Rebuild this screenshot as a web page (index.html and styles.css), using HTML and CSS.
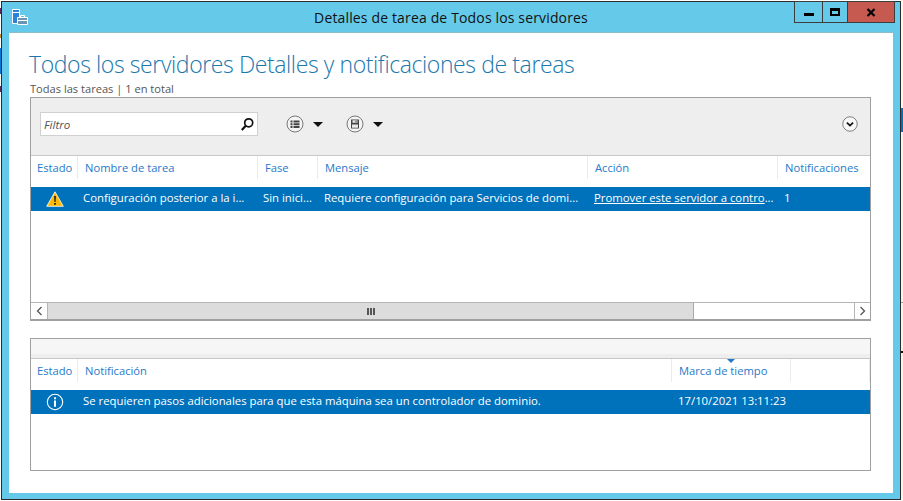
FILE: index.html
```html
<!DOCTYPE html>
<html lang="es">
<head>
<meta charset="utf-8">
<title>Detalles de tarea de Todos los servidores</title>
<link rel="stylesheet" href="styles.css">
</head>
<body>
<div class="window">
  <header class="titlebar">
    <svg class="app-icon" width="18" height="18" viewBox="0 0 18 18">
      <path d="M1.500.5h7v14h-7z" fill="#2b83d8" stroke="#fff"/>
      <path d="M2 3.500h6" stroke="#fff"/>
      <path d="M6.500 8.500h10v7h-10z" fill="#6b94b4" stroke="#fff"/>
      <path d="M9.500 8V6.500h4V8M7 11.500h9" stroke="#fff" fill="none"/>
    </svg>
    <div class="window-title">Detalles de tarea de Todos los servidores</div>
    <div class="controls">
      <div class="ctl ctl-min"><span class="glyph-min"></span></div>
      <div class="ctl ctl-max"><span class="glyph-max"></span></div>
      <div class="ctl ctl-close">
        <svg width="10" height="9" viewBox="0 0 10 9"><path d="M1.500 1l7 7M8.500 1l-7 7" stroke="#000" stroke-width="2.200" fill="none"/></svg>
      </div>
    </div>
  </header>
  <main class="content">
    <h1 class="heading">Todos los servidores Detalles y notificaciones de tareas</h1>
    <p class="summary">Todas las tareas | 1 en total</p>

    <section class="panel panel-top">
      <div class="toolbar">
        <div class="filter">
          <span class="filter-text">Filtro</span>
          <svg width="15" height="15" viewBox="0 0 15 15"><circle cx="8.700" cy="5.800" r="4" fill="none" stroke="#111" stroke-width="1.700"/><path d="M5.800 8.800L1.800 13" stroke="#111" stroke-width="2.200"/></svg>
        </div>
        <div class="tool">
          <svg width="18" height="18" viewBox="0 0 18 18"><circle cx="9" cy="9" r="8" fill="#f4f4f4" stroke="#777"/><path d="M4.500 5.500h2v2h-2zM4.500 8.200h2v2h-2zM4.500 10.900h2v2h-2zM7.500 5.500h6v2h-6zM7.500 8.200h6v2h-6zM7.500 10.900h6v2h-6z" fill="#444"/></svg>
          <span class="caret"></span>
        </div>
        <div class="tool">
          <svg width="18" height="18" viewBox="0 0 18 18"><circle cx="9" cy="9" r="8" fill="#f4f4f4" stroke="#777"/><path d="M5 4.500h8v9H5z" fill="#444"/><path d="M6.500 5.200h5v2.600h-5zM6 9.500h6v3.300H6z" fill="#e8e8e8"/><path d="M9.500 5.500h1v2h-1z" fill="#444"/></svg>
          <span class="caret"></span>
        </div>
        <svg class="expand" width="16" height="16" viewBox="0 0 17 17"><circle cx="8.500" cy="8.500" r="7.700" fill="#f8f8f8" stroke="#777"/><path d="M5.200 7l3.300 3.200L11.800 7" fill="none" stroke="#111" stroke-width="1.900"/></svg>
      </div>
      <div class="cols cols-tasks head">
        <div class="hcell">Estado</div>
        <div class="hcell">Nombre de tarea</div>
        <div class="hcell">Fase</div>
        <div class="hcell">Mensaje</div>
        <div class="hcell">Acción</div>
        <div class="hcell">Notificaciones</div>
      </div>
      <div class="cols cols-tasks row">
        <div class="cell cell-icon">
          <svg width="18" height="16" viewBox="0 0 18 16"><path d="M9 .8L17.300 15.300H.7z" fill="#ffb900" stroke="#fff" stroke-width=".8"/><path d="M8.100 5h1.800l-.3 6H8.400zM8.100 12h1.800v1.800H8.100z" fill="#222"/></svg>
        </div>
        <div class="cell cell-tight">Configuración posterior a la i...</div>
        <div class="cell cell-tight">Sin inici...</div>
        <div class="cell">Requiere configuración para Servicios de domi...</div>
        <div class="cell"><a class="link">Promover este servidor a contro</a>...</div>
        <div class="cell">1</div>
      </div>
      <div class="spacer spacer-top"></div>
      <div class="scrollbar">
        <div class="sb-btn">
          <svg width="7" height="10" viewBox="0 0 7 10"><path d="M5.500 1L1.500 5l4 4" fill="none" stroke="#555" stroke-width="1.300"/></svg>
        </div>
        <div class="sb-thumb"><span class="grip"></span></div>
        <div class="sb-rest"></div>
        <div class="sb-btn sb-btn-right">
          <svg width="7" height="10" viewBox="0 0 7 10"><path d="M1.500 1l4 4-4 4" fill="none" stroke="#555" stroke-width="1.300"/></svg>
        </div>
      </div>
    </section>

    <section class="panel panel-bottom">
      <div class="strip"></div>
      <div class="cols cols-notes head">
        <div class="hcell">Estado</div>
        <div class="hcell">Notificación</div>
        <div class="hcell hcell-sorted">Marca de tiempo<span class="sort-arrow"></span></div>
        <div class="hcell"></div>
      </div>
      <div class="cols cols-notes row">
        <div class="cell cell-icon">
          <svg width="18" height="18" viewBox="0 0 18 18"><circle cx="9" cy="9" r="7.700" fill="none" stroke="#fff" stroke-width="1.100"/><path d="M8 4.200h2v2H8zM8 7.500h2v6.300H8z" fill="#fff"/></svg>
        </div>
        <div class="cell cell-tight">Se requieren pasos adicionales para que esta máquina sea un controlador de dominio.</div>
        <div class="cell">17/10/2021 13:11:23</div>
        <div class="cell"></div>
      </div>
    </section>
  </main>
</div>
</body>
</html>
```
FILE: styles.css
```css
* { box-sizing: border-box; }
html, body { margin: 0; height: 100%; }
body {
  width: 903px;
  height: 501px;
  overflow: hidden;
  padding: 1px 2px 1px 1px;
  background-color: #fff;
  background-image:
    linear-gradient(#fff 0 8px, #5a2a5a 8px 14px, #fff 14px 34px, #c98a3a 34px 38px, #fff 38px 48px, #0a78d0 48px 74px, #fff 74px 86px, #5a2a5a 86px 92px, #fff 92px),
    linear-gradient(#fbf8e6 0 108px, #0072bc 108px 132px, #f4f4f4 132px 302px, #999 302px 303px, #f4f4f4 303px 351px, #111 351px 353px, #f4f4f4 353px);
  background-size: 1px 100%, 2px 100%;
  background-position: left top, right top;
  background-repeat: no-repeat;
  font-family: "Open Sans", "Noto Sans", sans-serif;
}
.window {
  width: 900px;
  height: 499px;
  display: flex;
  flex-direction: column;
  background: #65c9ea;
  border: 1px solid #2b2b2b;
}
.titlebar {
  height: 30px;
  flex: none;
  display: flex;
  align-items: flex-start;
  position: relative;
}
.app-icon { margin: 7px 0 0 9px; }
.window-title {
  position: absolute;
  left: 0;
  right: 0;
  top: 6px;
  text-align: center;
  font-size: 14px;
  line-height: 19px;
  color: #111;
  letter-spacing: .15px;
}
.controls {
  margin-left: auto;
  margin-right: 5px;
  display: flex;
  height: 22px;
  margin-top: -1px;
  border: 1px solid #3d3d3d;
}
.ctl {
  display: flex;
  align-items: center;
  justify-content: center;
}
.ctl-min { width: 28px; border-right: 1px solid #3d3d3d; align-items: flex-end; padding-bottom: 6px; }
.ctl-max { width: 25px; border-right: 1px solid #3d3d3d; }
.ctl-close { width: 46px; background: #c75a50; }
.glyph-min { display: block; width: 10px; height: 3px; background: #000; }
.glyph-max { display: block; width: 10px; height: 8px; border: 2px solid #000; border-top-width: 3px; }
.content {
  flex: 1;
  margin: 0 7px 6px 7px;
  background: #fff;
  border-top: 1px solid #8fb9cc;
  padding: 15px 22px 0 21px;
  min-height: 0;
}
.heading {
  margin: 0 0 0 -1px;
  font-size: 23px;
  line-height: 33px;
  font-weight: 300;
  letter-spacing: -.4px;
  color: #1a78ad;
  white-space: nowrap;
}
.summary {
  margin: 0;
  font-size: 11.1px;
  line-height: 16px;
  color: #555;
  white-space: nowrap;
}
.panel {
  border: 1px solid #a0a0a0;
  display: flex;
  flex-direction: column;
  background: #fff;
}
.panel-top { height: 224px; }
.panel-bottom { height: 133px; margin-top: 17px; }
.toolbar {
  height: 58px;
  flex: none;
  background: #eee;
  border-bottom: 1px solid #c8c8c8;
  display: flex;
  align-items: flex-start;
  padding: 14px 12px 0 9px;
}
.filter {
  width: 218px;
  height: 24px;
  background: #fff;
  border: 1px solid #d0d0d0;
  display: flex;
  align-items: center;
  justify-content: space-between;
  padding: 0 2px 0 3px;
  margin-right: 28px;
}
.filter-text { font-size: 11.6px; font-style: italic; color: #555; }
.tool {
  display: flex;
  align-items: center;
  gap: 9px;
  width: 60px;
  height: 22px;
  margin-top: 1px;
}
.caret {
  width: 0;
  height: 0;
  border-left: 5px solid transparent;
  border-right: 5px solid transparent;
  border-top: 5px solid #111;
}
.expand { margin-left: auto; margin-top: 4px; }
.cols { display: grid; flex: none; }
.cols-tasks { grid-template-columns: 47px 180px 60px 270px 190px 92px; }
.cols-notes { grid-template-columns: 47px 594px 119px 79px; }
.head { height: 31px; }
.hcell {
  position: relative;
  padding: 4px 0 0 7px;
  font-size: 11.2px;
  line-height: 15px;
  color: #2679c9;
  white-space: nowrap;
  border-right: 1px solid #ebebeb;
  margin-bottom: 8px;
}
.hcell:first-child { padding-left: 6px; }
.hcell:last-child { border-right: 0; }
.panel-bottom .hcell:last-child { border-right: 1px solid #ebebeb; }
.sort-arrow {
  position: absolute;
  left: 55px;
  top: 0;
  width: 0;
  height: 0;
  border-left: 4px solid transparent;
  border-right: 4px solid transparent;
  border-top: 4px solid #2679c9;
}
.row { height: 24px; background: #0072bc; flex: none; }
.cell {
  font-size: 11.35px;
  line-height: 21px;
  color: #fff;
  padding-left: 6px;
  white-space: nowrap;
  overflow: hidden;
}
.cell-tight { padding-left: 5px; }
.cell-icon { display: flex; align-items: center; justify-content: center; padding: 0; }
.link { text-decoration: underline; }
.spacer-top { flex: 1; }
.scrollbar {
  height: 18px;
  flex: none;
  display: flex;
  border-top: 1px solid #b5b5b5;
  border-bottom: 1px solid #a0a0a0;
}
.sb-btn {
  width: 17px;
  flex: none;
  display: flex;
  align-items: center;
  justify-content: center;
  border-right: 1px solid #b5b5b5;
}
.sb-btn-right { border-right: 0; border-left: 1px solid #b5b5b5; width: 16px; }
.sb-thumb {
  width: 646px;
  flex: none;
  background: #dcdcdc;
  border-right: 1px solid #a8a8a8;
  display: flex;
  align-items: center;
  justify-content: center;
}
.grip {
  width: 8px;
  height: 7px;
  background: repeating-linear-gradient(90deg, #555 0 2px, #dcdcdc 2px 3px);
}
.sb-rest { flex: 1; background: #fff; }
.strip {
  height: 20px;
  flex: none;
  background: linear-gradient(#f6f6f6 0 15px, #eee 15px);
  border-bottom: 1px solid #c8c8c8;
}
```
